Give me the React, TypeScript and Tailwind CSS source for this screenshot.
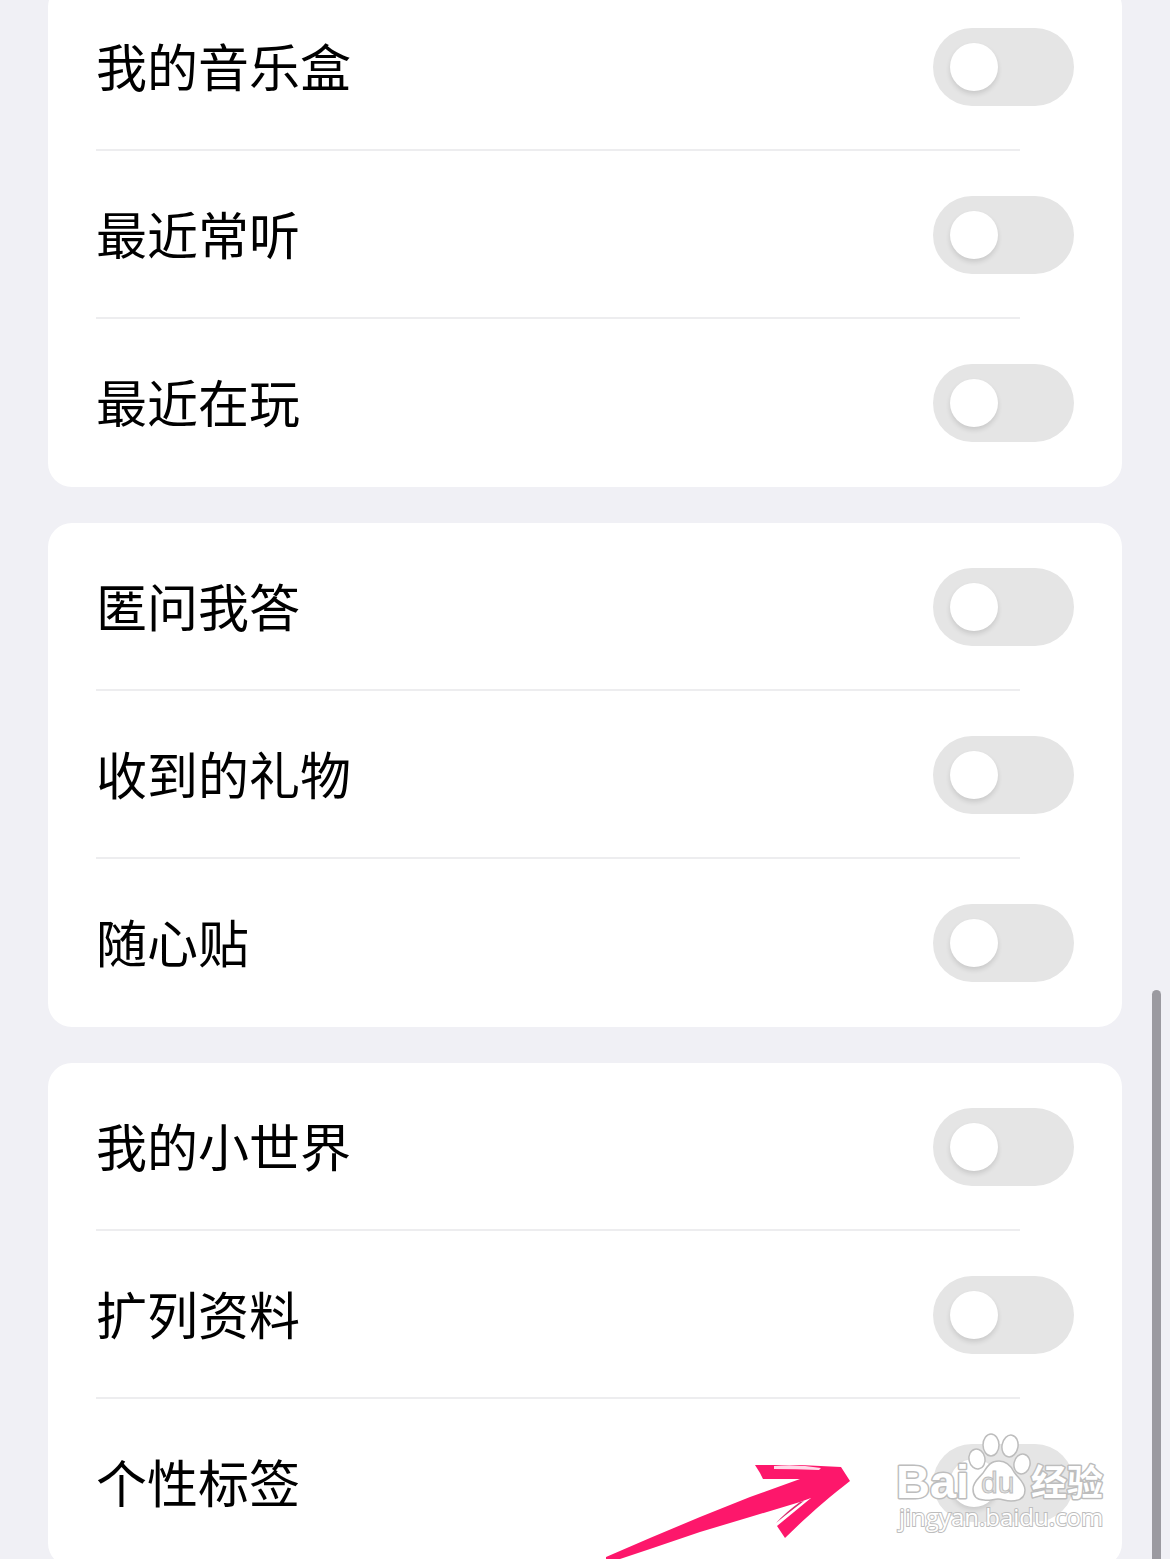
import React, { useState } from 'react';

const GROUPS = [
  ['我的音乐盒', '最近常听', '最近在玩'],
  ['匿问我答', '收到的礼物', '随心贴'],
  ['我的小世界', '扩列资料', '个性标签'],
];

interface SettingRowProps {
  label: string;
  checked: boolean;
  onChange: (val: boolean) => void;
}

function SettingRow({ label, checked, onChange }: SettingRowProps) {
  return (
    <li className="group">
      <label className="flex h-[168px] items-center justify-between px-12">
        <span className="pb-1 text-[51px] leading-[72px] text-black">{label}</span>
        <input
          type="checkbox"
          role="switch"
          checked={checked}
          onChange={(e) => onChange(e.target.checked)}
          className="flex h-[78px] w-[141px] shrink-0 appearance-none items-center rounded-full bg-[#e5e5e5] px-[17px] before:size-12 before:rounded-full before:bg-white before:shadow-[0_3px_5px_rgba(0,0,0,0.12)] before:content-[''] checked:justify-end checked:bg-[#1677ff]"
        />
      </label>
      <div className="-mt-0.5 mr-[102px] ml-12 h-0.5 bg-[#ededef] group-last:hidden" />
    </li>
  );
}

function Arrow() {
  return (
    <svg viewBox="0 0 280 119" className="absolute right-[290px] bottom-0 h-[119px] w-[280px]" aria-hidden="true">
      <path
        d="M6 117 L50 98 L100 77 L150 57 L200 39 L163 39 L160 33 L155 25 L200 25 L241 27 L250 41 C228 58 203 80 185 98 L177 86 L211 58 L200 62 L150 77 L100 92 L50 109 L20 119 L6 119 Z"
        fill="#fd176b"
      />
      <path d="M174 26 Q197 24 221 28 L219 30 Q195 29 174 29 Z" fill="#ffd9e8" />
      <path d="M176 83 Q186 72 200 62 L204 61 Q188 73 176 83 Z" fill="#d9296f" />
    </svg>
  );
}

function Watermark() {
  return (
    <svg
      viewBox="0 0 290 139"
      className="pointer-events-none absolute right-0 bottom-0 h-[139px] w-[290px]"
      role="img"
      aria-label="Baidu 经验"
    >
      <g fill="#fff" stroke="#bdbdbd" strokeWidth="1.5">
        <g strokeWidth="3" paintOrder="stroke" strokeLinejoin="round">
          <text x="16" y="78" fontFamily="'Liberation Sans', Arial, sans-serif" fontWeight="700" fontSize="47">Bai</text>
          <text x="151" y="76" fontFamily="'Noto Sans CJK SC', sans-serif" fontWeight="700" fontSize="36">经验</text>
        </g>
        <ellipse cx="97" cy="39" rx="8" ry="10" transform="rotate(-12 97 39)" />
        <ellipse cx="111" cy="25" rx="8" ry="11" />
        <ellipse cx="130" cy="26" rx="8" ry="11" transform="rotate(10 130 26)" />
        <ellipse cx="142" cy="44" rx="8" ry="10" transform="rotate(12 142 44)" />
        <path d="M119 41 C127 41 131 46 134 52 C138 58 145 62 145 70 C145 78 139 81 131 81 C125 81 123 79 118 79 C113 79 110 81 104 80 C97 80 93 76 93 69 C93 62 99 58 103 53 C107 47 110 41 119 41 Z" />
        <text x="101" y="73" fontFamily="'Liberation Sans', Arial, sans-serif" fontSize="30" fill="#e2e2e2" strokeWidth="1">du</text>
        <text x="19" y="106" fontFamily="'Open Sans', sans-serif" fontSize="24" strokeWidth="2" paintOrder="stroke">jingyan.baidu.com</text>
      </g>
    </svg>
  );
}

export default function App() {
  const [enabled, setEnabled] = useState<Record<string, boolean>>({});

  return (
    <div className="relative h-screen overflow-hidden bg-[#f0f0f5] font-['Noto_Sans_CJK_SC',sans-serif]">
      <main className="-mt-[17px] flex flex-col gap-9 px-12">
        {GROUPS.map((group) => (
          <ul key={group[0]} className="overflow-hidden rounded-3xl bg-white">
            {group.map((label) => (
              <SettingRow
                key={label}
                label={label}
                checked={!!enabled[label]}
                onChange={(val) => setEnabled({ ...enabled, [label]: val })}
              />
            ))}
          </ul>
        ))}
      </main>
      <div className="absolute top-[990px] right-[9px] bottom-0 w-[9px] rounded-t-full bg-[#9b9aa0]" />
      <Arrow />
      <Watermark />
    </div>
  );
}
